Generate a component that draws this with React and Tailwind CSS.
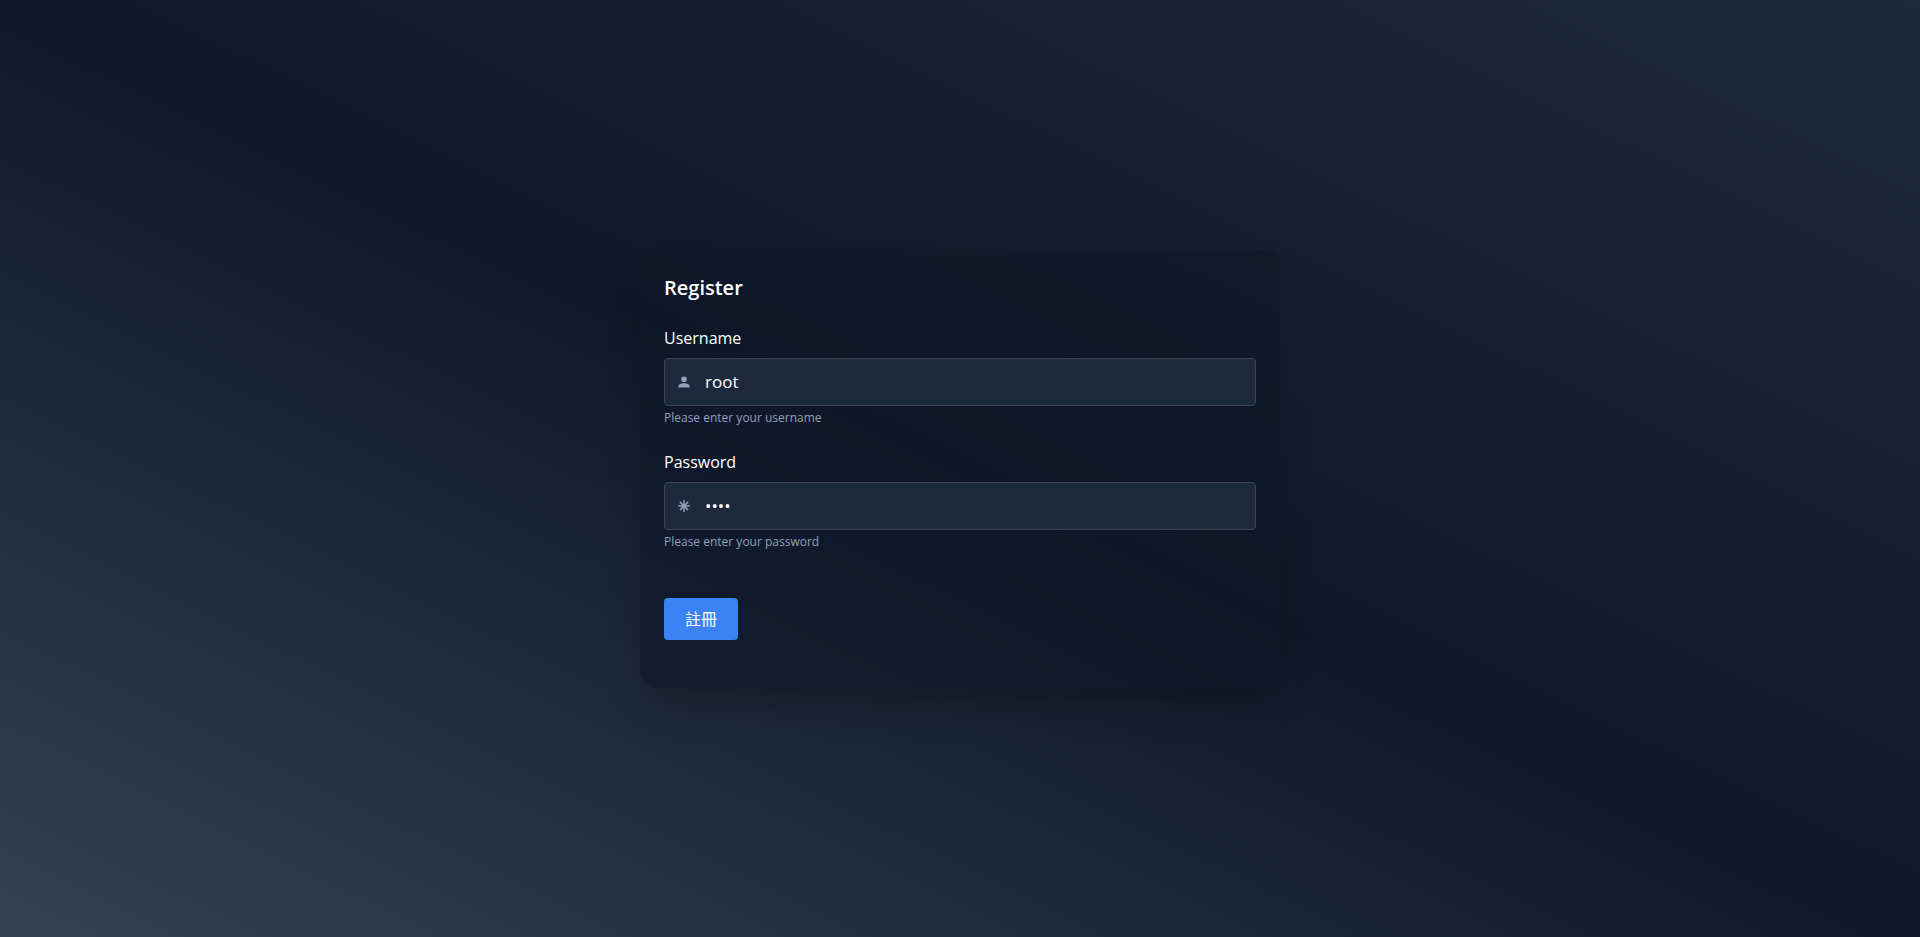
import React from "react";

function PersonIcon() {
  return (
    <svg viewBox="0 0 12 12" className="h-3 w-3 shrink-0 fill-slate-400" aria-hidden="true">
      <circle cx="6" cy="3.2" r="2.8" />
      <path d="M.3 11.5V10.4C.3 8.5 3 7.3 6 7.3s5.7 1.2 5.7 3.1v1.1z" />
    </svg>
  );
}

function AsteriskIcon() {
  return (
    <svg viewBox="0 0 12 12" className="h-3 w-3 shrink-0 stroke-slate-400" fill="none" strokeWidth="1.5" aria-hidden="true">
      <path d="M6 0v12M0 6h12M1.9 1.9l8.2 8.2M10.1 1.9l-8.2 8.2" />
    </svg>
  );
}

function Field({ id, label, help, icon, ...input }) {
  return (
    <div className="flex flex-col">
      <label htmlFor={id} className="mb-2 text-base leading-6 font-medium text-white">
        {label}
      </label>
      <div className="flex h-12 items-center rounded border border-[#3b4454] bg-slate-800 pl-[13px]">
        {icon}
        <input
          id={id}
          aria-describedby={`${id}-help`}
          className="h-full min-w-0 flex-1 bg-transparent px-[15px] text-[17px] leading-6 text-white outline-none"
          {...input}
        />
      </div>
      <p id={`${id}-help`} className="mt-1 text-xs leading-4 text-slate-400">
        {help}
      </p>
    </div>
  );
}

export default function App() {
  return (
    <main className="flex min-h-screen items-center justify-center bg-linear-to-tr/srgb from-[#334155] via-[#0f172a] to-[#1e293b] font-['Open_Sans','Noto_Sans_CJK_TC',sans-serif]">
      <form
        className="w-full max-w-[640px] rounded-2xl bg-[#0f172a]/70 px-6 pt-[22px] pb-12 shadow-[0_24px_40px_-12px_rgb(0_0_0/0.28)]"
        onSubmit={(event) => event.preventDefault()}
      >
        <h1 className="text-xl leading-8 font-semibold text-white">Register</h1>
        <div className="mt-[22px] flex flex-col gap-6">
          <Field
            id="username"
            label="Username"
            help="Please enter your username"
            icon={<PersonIcon />}
            type="text"
            autoComplete="username"
            defaultValue="root"
          />
          <Field
            id="password"
            label="Password"
            help="Please enter your password"
            icon={<AsteriskIcon />}
            type="password"
            autoComplete="new-password"
            defaultValue="root"
          />
        </div>
        <button type="submit" className="mt-12 h-[42px] rounded bg-[#3b82f6] px-[21px] text-base leading-6 text-white">
          註冊
        </button>
      </form>
    </main>
  );
}
